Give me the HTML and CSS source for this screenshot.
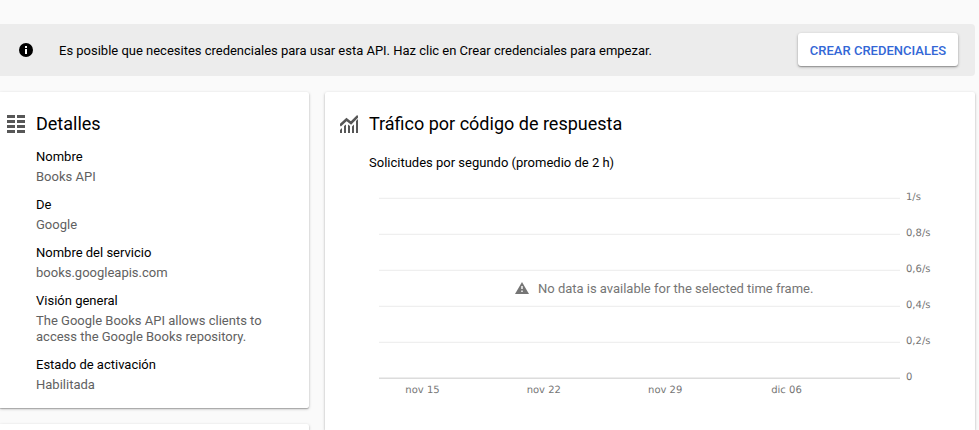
FILE: index.html
```html
<!DOCTYPE html>
<html lang="es">
<head>
<meta charset="utf-8">
<title>Books API</title>
<link rel="stylesheet" href="styles.css">
</head>
<body>
<div class="banner">
  <svg class="banner-icon" width="14" height="14" viewBox="0 0 14 14"><circle cx="7" cy="7" r="7" fill="#000"/><path d="M6 3h2v2H6zM6 6h2v5H6z" fill="#fff"/></svg>
  <p class="banner-text">Es posible que necesites credenciales para usar esta API. Haz clic en Crear credenciales para empezar.</p>
  <button class="button">Crear credenciales</button>
</div>
<main class="columns">
  <div class="side">
    <section class="card details">
      <header class="card-head">
        <svg width="18" height="18" viewBox="0 0 18 18" fill="#575757"><path d="M0 0h8v3H0zM10 0h8v3h-8zM0 5h8v3H0zM10 5h8v3h-8zM0 10h8v3H0zM10 10h8v3h-8zM0 15h8v3H0zM10 15h8v3h-8z"/></svg>
        <h2>Detalles</h2>
      </header>
      <dl>
        <dt>Nombre</dt><dd>Books API</dd>
        <dt>De</dt><dd>Google</dd>
        <dt>Nombre del servicio</dt><dd>books.googleapis.com</dd>
        <dt>Visión general</dt><dd>The Google Books API allows clients to access the Google Books repository.</dd>
        <dt>Estado de activación</dt><dd>Habilitada</dd>
      </dl>
    </section>
    <section class="card next"></section>
  </div>
  <section class="card traffic">
    <header class="card-head">
      <svg width="18" height="18" viewBox="0 0 18 18" fill="#575757"><path d="M0 15l2-2v5H0zM4 11l2-1.500V18H4zM8 9.500l2 1.500v7H8zM12 11.500l2-2V18h-2zM16 6l2-2v14h-2z"/><path d="M0 10.500L6.500 4.500l4.500 3.500L18 1" fill="none" stroke="#575757" stroke-width="2.500"/></svg>
      <h2>Tráfico por código de respuesta</h2>
    </header>
    <h3>Solicitudes por segundo (promedio de 2 h)</h3>
    <div class="chart">
      <svg class="plot" width="590" height="210" viewBox="0 0 590 210">
        <path class="grid" d="M10 13.300h521M10 49.300h521M10 85.300h521M10 121.300h521M10 157.300h521"/>
        <path class="axis" d="M10 193.300h521"/>
        <g class="labels">
          <text x="537" y="15.400">1/s</text>
          <text x="537" y="51.400">0,8/s</text>
          <text x="537" y="87.400">0,6/s</text>
          <text x="537" y="123.400">0,4/s</text>
          <text x="537" y="159.400">0,2/s</text>
          <text x="537" y="195.400">0</text>
        </g>
        <g class="labels dates">
          <text x="53.500" y="208">nov 15</text>
          <text x="174.800" y="208">nov 22</text>
          <text x="296.200" y="208">nov 29</text>
          <text x="417.500" y="208">dic 06</text>
        </g>
      </svg>
      <div class="empty">
        <svg width="14" height="12" viewBox="0 0 14 12"><path d="M7 0l7 12H0z" fill="#757575"/><path d="M6 4h2v3H6zM6 8.500h2V10H6z" fill="#fff" fill-opacity=".7"/></svg>
        <span>No data is available for the selected time frame.</span>
      </div>
    </div>
  </section>
</main>
</body>
</html>
```
FILE: styles.css
```css
* { box-sizing: border-box; }
body {
  margin: 0;
  height: 430px;
  overflow: hidden;
  padding-top: 24px;
  background: #fafafa;
  color: #000;
  font: 13px/16px Roboto, sans-serif;
}
h2, h3, p, dl, dd { margin: 0; }
.banner {
  display: flex;
  align-items: center;
  width: 975px;
  height: 52px;
  padding: 0 17px 0 19px;
  border-radius: 0 4px 4px 0;
  background: #ececec;
}
.banner-text { margin: 2px 0 0 26px; letter-spacing: -.008px; }
.button {
  width: 160px;
  height: 33px;
  margin: 0 0 1px auto;
  padding: 2px 0 0;
  border: 0;
  border-radius: 3px;
  background: #fff;
  box-shadow: 0 1px 3px rgba(0, 0, 0, .3), 0 1px 1px rgba(0, 0, 0, .2);
  color: #3367d6;
  font: 500 13px/16px Roboto, sans-serif;
  text-transform: uppercase;
}
.columns {
  display: flex;
  gap: 16px;
  width: 975px;
  height: 338px;
  margin-top: 16px;
}
.side { display: flex; flex-direction: column; gap: 16px; width: 309px; }
.card {
  border-radius: 2px;
  background: #fff;
  box-shadow: 0 1px 3px rgba(0, 0, 0, .25), 0 1px 1px rgba(0, 0, 0, .2);
}
.details { height: 316px; padding: 20px 36px 0 7px; border-radius: 0 2px 2px 0; }
.next { flex: 1; border-radius: 0 2px 0 0; }
.traffic { flex: 1; padding: 20px 15px 0; border-radius: 2px 2px 0 0; }
.card-head { display: flex; align-items: center; gap: 11px; height: 24px; }
h2 { font-size: 18px; font-weight: 400; line-height: 24px; }
dl { margin: 13px 0 0 29px; }
dt { margin-bottom: 4px; }
dd { margin-bottom: 12px; color: #616161; }
h3 { margin: 19px 0 0 29px; font-size: 13px; font-weight: 400; line-height: 16px; }
.chart { position: relative; margin: 14px 0 0 29px; width: 590px; }
.plot { display: block; }
.grid { stroke: #efefef; stroke-width: 1.3; }
.axis { stroke: #dcdcdc; stroke-width: 1.4; }
.labels {
  fill: #757575;
  font: 10px "DejaVu Sans", sans-serif;
  text-rendering: geometricPrecision;
}
.dates { text-anchor: middle; }
.empty {
  position: absolute;
  top: 96px;
  left: 146px;
  display: flex;
  align-items: center;
  gap: 9px;
  color: #757575;
  letter-spacing: -.01px;
  white-space: nowrap;
}
.empty svg { margin-bottom: 2px; }
```
